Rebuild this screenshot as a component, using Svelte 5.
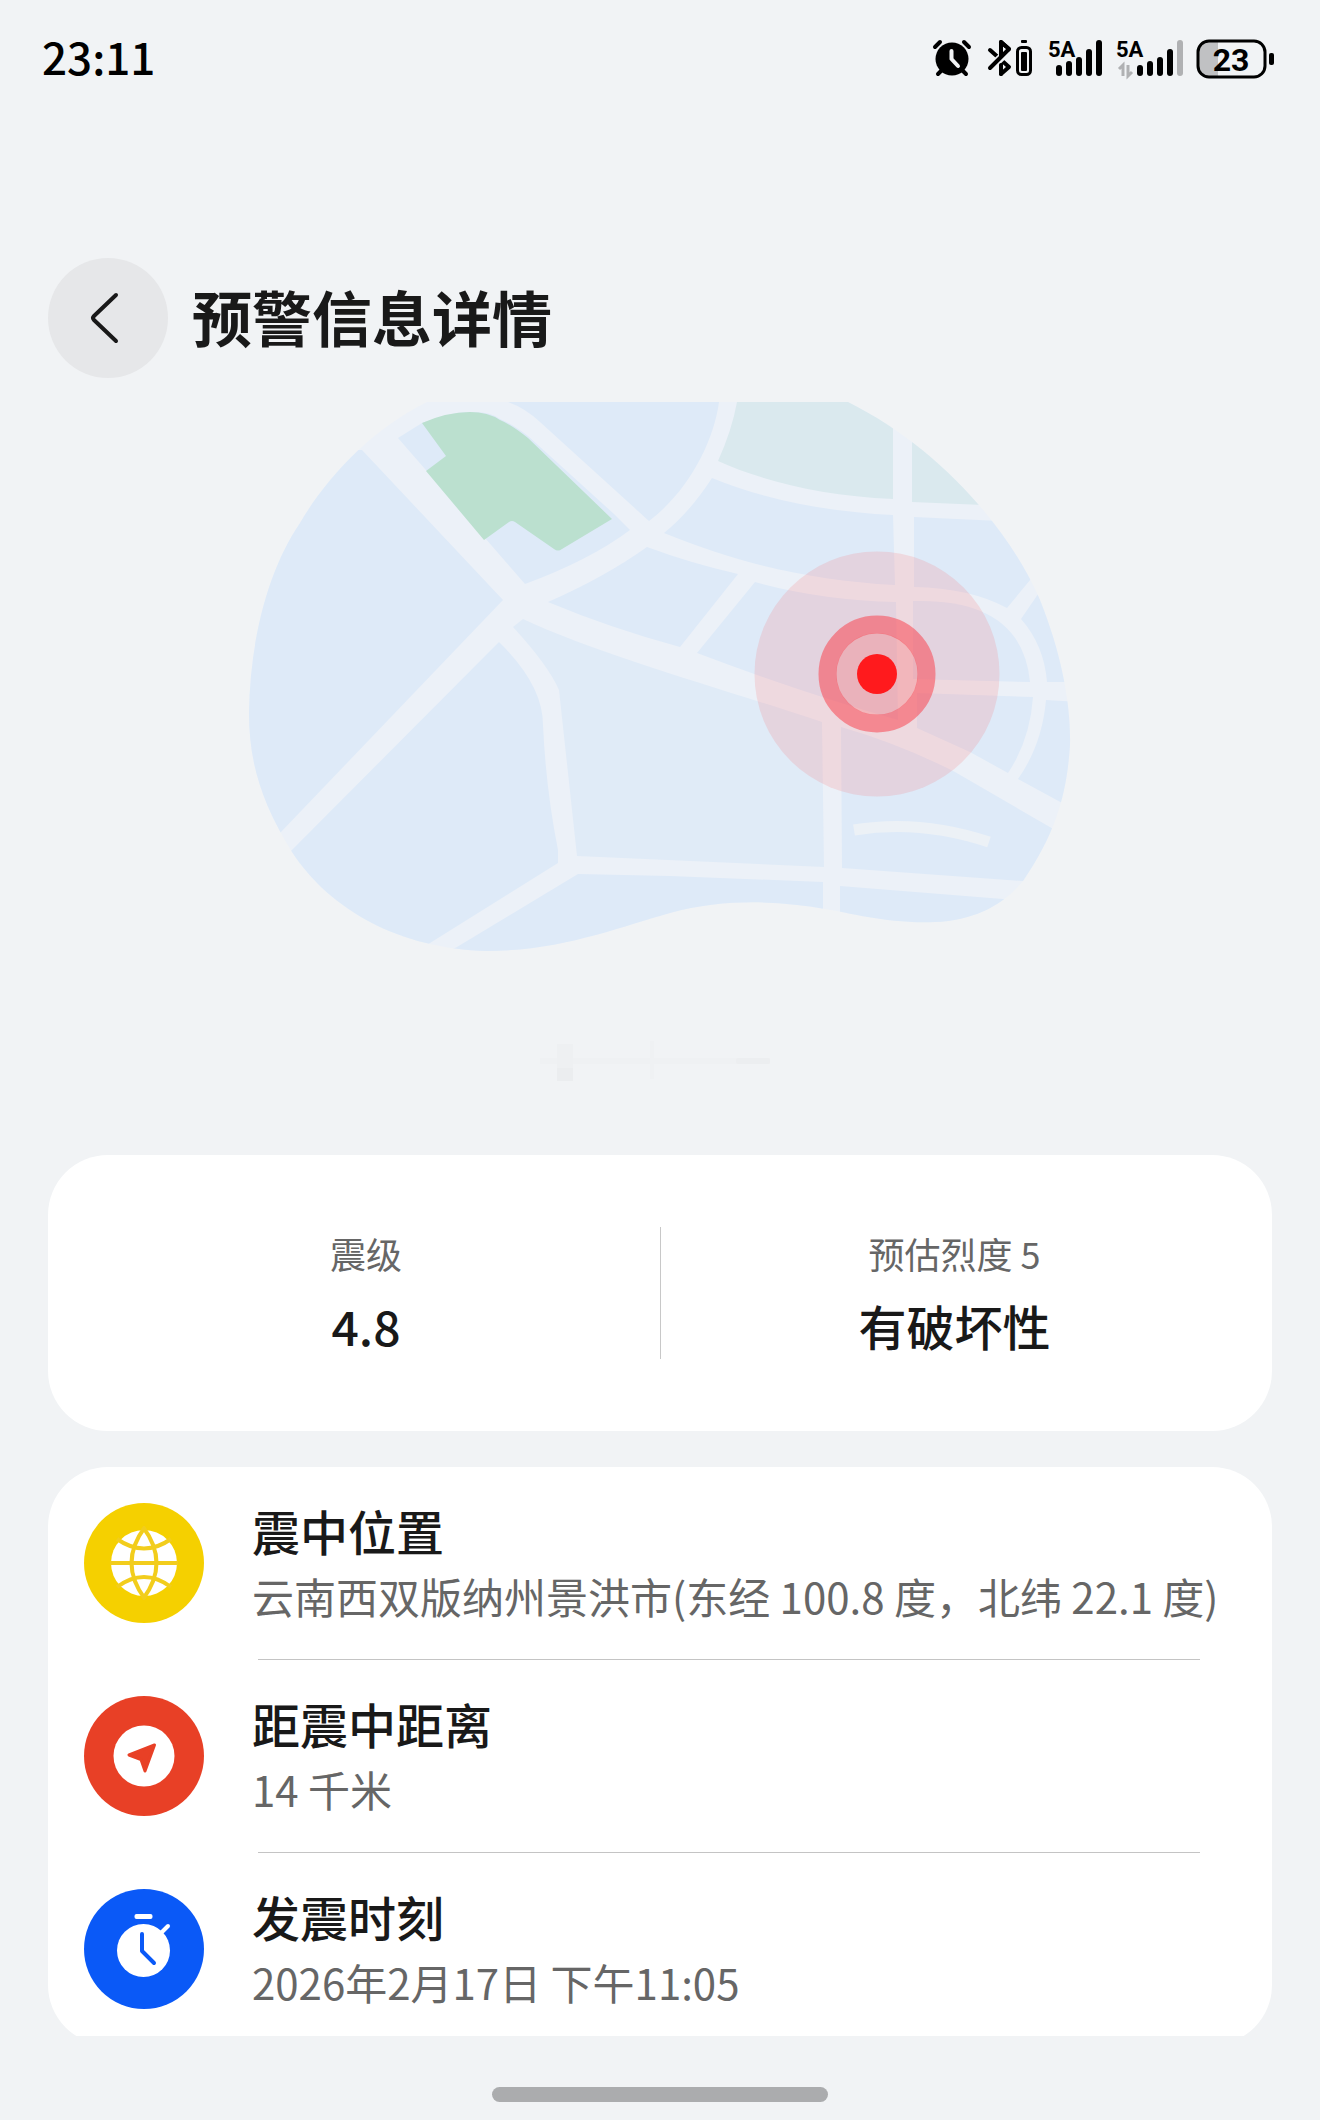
<script lang="ts">
  interface Stat {
    label: string;
    value: string;
  }
  interface Detail {
    icon: 'globe' | 'arrow' | 'clock';
    title: string;
    text: string;
  }

  const stats: Stat[] = [
    { label: '震级', value: '4.8' },
    { label: '预估烈度 5', value: '有破坏性' },
  ];

  const details: Detail[] = [
    { icon: 'globe', title: '震中位置', text: '云南西双版纳州景洪市(东经 100.8 度，北纬 22.1 度)' },
    { icon: 'arrow', title: '距震中距离', text: '14 千米' },
    { icon: 'clock', title: '发震时刻', text: '2026年2月17日 下午11:05' },
  ];

  // Tops of the five signal bars; they all end on the same baseline.
  const barTops = [29, 25, 21, 13, 4];
  const BAR_BOTTOM = 40;

  // City blocks of the map, drawn over a road-coloured ground.
  const blocks = [
    'M362 450 L503 600 L280 833 H200 V450 Z',
    'M398 438 L422 423 Q455 411 470 412 Q490 411 500 419 Q512 424 528 436 L614 514 L630 530 Q590 560 525 584 Z',
    'M508 402 Q525 408 540 422 L649 521 C690 490 714 440 719 402 Z',
    'M712 478 Q790 510 893 515 L895 585 C810 580 740 564 664 533 Q690 512 712 478 Z',
    'M914 517 L1000 521 H1060 L1050 556 L1007 608 Q970 588 914 587 Z',
    'M1021 619 L1060 562 L1100 600 V682 H1047 Q1044 645 1021 619 Z',
    'M1046 700 L1100 703 V823 L1064 804 L1018 779 Q1042 745 1046 700 Z',
    'M913 601 Q1022 598 1030 682 L913 679 Z',
    'M917 693 L1033 697 Q1030 740 1008 773 L970 752 L917 728 Z',
    'M755 582 Q820 600 896 602 L898 720 Q800 692 697 653 Z',
    'M647 547 Q690 563 738 574 L680 647 Q610 628 548 602 Q605 577 647 547 Z',
    'M499 642 Q543 685 543 725 Q546 790 558 850 V863 L430 943 L380 975 H250 L272 870 Z',
    'M578 874 L670 876 L823 882 V960 H430 L457 947 Z',
    'M840 886 L1003 899 L1030 901 V960 H840 Z',
    'M841 727 Q900 744 955 772 L1055 830 L1100 856 V885 L1023 881 L842 868 Z',
  ];
</script>

<div class="screen">
  <div class="status">
    <span class="time">23:11</span>
    <div class="status-icons">
      <svg width="42" height="44" viewBox="0 0 42 44" aria-hidden="true">
        <g fill="none" stroke="#000" stroke-width="4" stroke-linecap="round">
          <path d="M3 11 L8 6 M37 11 L32 6 M6 38 L11 33 M34 38 L29 33" />
        </g>
        <circle cx="20" cy="23" r="16.5" fill="#000" />
        <path d="M19.5 15 V23 L26 30" fill="none" stroke="#f1f3f5" stroke-width="4" stroke-linecap="round" stroke-linejoin="round" />
      </svg>
      <svg width="50" height="44" viewBox="0 0 50 44" aria-hidden="true">
        <g fill="none" stroke-linecap="round" stroke-linejoin="round">
          <path d="M4 14 L23 31 L15 38 V6 L23 13 L16 19" stroke="#000" stroke-width="4" />
          <path d="M3 33 L22 15" stroke="#f1f3f5" stroke-width="8" stroke-linecap="butt" />
          <path d="M15 38 V29 M15 6 V20 M15 6 L23 13 L4 32" stroke="#000" stroke-width="4" />
          <rect x="31.5" y="11.5" width="13" height="27" rx="4" stroke="#000" stroke-width="3" />
        </g>
        <rect x="35" y="16" width="6" height="19" rx="1" fill="#000" />
        <rect x="35" y="4" width="6" height="3" rx="1" fill="#000" />
      </svg>
      <svg width="56" height="44" viewBox="0 0 56 44" aria-hidden="true">
        <text class="net" x="0" y="21">5A</text>
        {#each barTops as top, i}
          <rect x={8 + i * 10} y={top} width="6" height={BAR_BOTTOM - top} rx="3" />
        {/each}
      </svg>
      <svg width="68" height="44" viewBox="0 0 68 44" aria-hidden="true">
        <text class="net" x="0" y="21">5A</text>
        <path d="M7 40 V29 L3 33 M12 29 V40 L16 36" fill="none" stroke="#b0b1b3" stroke-width="3" />
        {#each barTops as top, i}
          <rect x={21 + i * 10} y={top} width="6" height={BAR_BOTTOM - top} rx="3" fill={i === 4 ? '#b0b1b3' : '#000'} />
        {/each}
      </svg>
      <svg width="80" height="44" viewBox="0 0 80 44" aria-hidden="true">
        <path d="M22 5 H13 Q2 5 2 16 V30 Q2 41 13 41 H22 Z" fill="#c0c1c3" />
        <rect x="2" y="5" width="67" height="36" rx="11" fill="none" stroke="#000" stroke-width="3" />
        <rect x="73" y="17" width="5" height="12" rx="2" />
        <text class="charge" x="35" y="35" text-anchor="middle">23</text>
      </svg>
    </div>
  </div>

  <header>
    <button class="back" type="button" aria-label="返回">
      <svg width="120" height="120" viewBox="0 0 120 120" aria-hidden="true">
        <path
          d="M68 37 L46 58 Q44 60 46 62 L68 83"
          fill="none"
          stroke="#191919"
          stroke-width="4"
          stroke-linecap="round"
        />
      </svg>
    </button>
    <h1>预警信息详情</h1>
  </header>

  <main>
    <svg class="map" viewBox="240 402 840 552" role="img" aria-label="震中地图">
      <defs>
        <clipPath id="blob">
          <path
            d="M427 402 H848 C940 448 1010 530 1040 600 C1062 655 1071 705 1070 745 C1067 790 1058 830 1023 881 C1003 905 975 920 935 922 C890 924 850 913 825 909 C780 901 725 898 670 913 C620 927 560 951 487 951 C400 949 330 910 292 852 C260 800 249 760 249 713 C250 640 268 570 300 523 C325 480 370 430 427 402 Z"
          />
        </clipPath>
      </defs>
      <g clip-path="url(#blob)">
        <rect x="240" y="402" width="840" height="552" fill="#ecf1f8" />
        {#each blocks as d}
          <path {d} fill="#deeaf8" />
        {/each}
        <path
          d="M523 619 C600 655 720 688 822 722 L824 867 L577 856 L559 690 Q548 665 513 627 Z"
          fill="#e0ebf7"
        />
        <path d="M737 402 Q732 430 718 461 C760 480 820 496 893 499 V402 Z" fill="#dae9ee" />
        <path d="M912 402 V502 L985 505 V402 Z" fill="#dae9ee" />
        <path
          d="M422 423 Q447 412 470 412 Q488 412 500 420 Q512 425 528 438 L612 519 L562 549 Q558 552 554 549 L515 522 Q512 520 509 522 L484 540 L426 471 L446 456 Z"
          fill="#bbe0cf"
        />
        <path d="M854 830 Q920 819 989 842" fill="none" stroke="#ecf1f6" stroke-width="11" />
      </g>
      <circle cx="877" cy="674" r="122.5" fill="#ff5050" fill-opacity="0.15" />
      <circle cx="877" cy="674" r="41" fill="#ff5050" fill-opacity="0.25" />
      <circle cx="877" cy="674" r="49.5" fill="none" stroke="#fa4650" stroke-opacity="0.55" stroke-width="18" />
      <circle cx="877" cy="674" r="20" fill="#ff1a1d" />
    </svg>

    <svg class="trace" width="248" height="48" viewBox="0 0 248 48" aria-hidden="true">
      <rect x="4" y="20" width="230" height="6" fill="#eff1f3" />
      <rect x="200" y="20" width="34" height="6" rx="2" fill="#eceef0" />
      <rect x="21" y="6" width="16" height="37" fill="#eef0f2" />
      <rect x="21" y="30" width="16" height="13" fill="#ebedef" />
      <rect x="114" y="3" width="4" height="38" fill="#eff1f3" />
    </svg>

    <section class="card stats">
      {#each stats as stat}
        <div class="stat">
          <span class="stat-label">{stat.label}</span>
          <span class="stat-value">{stat.value}</span>
        </div>
      {/each}
    </section>

    <section class="card">
      {#each details as detail}
        <article class="detail">
          <svg width="120" height="120" viewBox="0 0 120 120" aria-hidden="true">
            {#if detail.icon === 'globe'}
              <circle cx="60" cy="60" r="60" fill="#f5d000" />
              <circle cx="60" cy="60" r="33" fill="#fff" />
              <g fill="none" stroke="#f2cd1c" stroke-width="4">
                <path d="M26 60 H94" />
                <path d="M61 24 Q34 60 61 96 M59 24 Q86 60 59 96" />
                <path d="M33 36 Q60 55 87 36 M33 84 Q60 64 87 84" />
              </g>
            {:else if detail.icon === 'arrow'}
              <circle cx="60" cy="60" r="60" fill="#e84026" />
              <circle cx="60" cy="60" r="30.5" fill="#fff" />
              <path
                d="M70.5 49 L45 59 L57 63.5 L61 75 Z"
                fill="#e84026"
                stroke="#e84026"
                stroke-width="3"
                stroke-linejoin="round"
              />
            {:else}
              <circle cx="60" cy="60" r="60" fill="#0a59f7" />
              <circle cx="59.5" cy="61.5" r="26.5" fill="#fff" />
              <rect x="50.5" y="25" width="18" height="5" rx="2" fill="#fff" />
              <path d="M76 45 L84 37" stroke="#fff" stroke-width="4" stroke-linecap="round" />
              <path
                d="M58 45 V62 L70 74"
                fill="none"
                stroke="#0a59f7"
                stroke-width="4"
                stroke-linecap="round"
                stroke-linejoin="round"
              />
            {/if}
          </svg>
          <div class="detail-body">
            <h2>{detail.title}</h2>
            <p>{detail.text}</p>
          </div>
        </article>
      {/each}
    </section>
  </main>

  <footer>
    <div class="home-bar"></div>
  </footer>
</div>

<style>
  :global(body) {
    background: #f1f3f5;
  }

  .screen {
    display: flex;
    flex-direction: column;
    height: 100vh;
    color: #191919;
    font-family: 'Noto Sans CJK SC', sans-serif;
  }

  .status {
    display: flex;
    align-items: center;
    justify-content: space-between;
    flex: none;
    height: 116px;
    padding: 0 44px 0 42px;
    color: #000;
  }

  .time {
    padding-bottom: 4px;
    font-size: 44px;
    font-weight: 500;
    line-height: 64px;
  }

  .status-icons {
    display: flex;
    gap: 12px;
  }

  .status-icons svg {
    overflow: visible;
  }

  .net,
  .charge {
    font-family: Roboto, sans-serif;
    font-weight: 700;
  }

  .net {
    font-size: 22px;
  }

  .charge {
    font-size: 32px;
  }

  header {
    display: flex;
    align-items: center;
    flex: none;
    gap: 24px;
    padding: 142px 48px 24px;
  }

  .back {
    flex: none;
    width: 120px;
    height: 120px;
    padding: 0;
    border: 0;
    border-radius: 50%;
    background: #e6e7e9;
    cursor: pointer;
  }

  .back svg {
    display: block;
  }

  h1 {
    margin: 0;
    padding-bottom: 4px;
    font-size: 60px;
    font-weight: 700;
    line-height: 84px;
  }

  /* The content scrolls between the title and the home bar. */
  main {
    display: flex;
    flex-direction: column;
    flex: 1;
    min-height: 0;
    padding: 0 48px;
    overflow-y: auto;
    scrollbar-width: none;
  }

  .map {
    flex: none;
    align-self: center;
    width: 840px;
    max-width: 100%;
  }

  .trace {
    flex: none;
    align-self: center;
    margin: 84px 0 69px;
  }

  .card {
    flex: none;
    border-radius: 60px;
    background: #fff;
  }

  .stats {
    display: grid;
    grid-template-columns: 1fr 1fr;
    margin-bottom: 36px;
    padding: 72px 0;
  }

  .stat {
    display: flex;
    flex-direction: column;
    align-items: center;
    gap: 16px;
    padding: 0 0 4px 24px;
  }

  .stat + .stat {
    padding: 0 24px 4px 0;
    border-left: 1px solid #c8c8c8;
  }

  .stat-label {
    color: #666;
    font-size: 36px;
    line-height: 52px;
  }

  .stat-value {
    font-size: 48px;
    font-weight: 500;
    line-height: 60px;
  }

  .detail {
    display: grid;
    grid-template-columns: 120px 1fr;
    align-items: center;
    column-gap: 48px;
    padding: 30px 36px;
  }

  .detail + .detail::before {
    content: '';
    grid-column: 1 / -1;
    height: 1px;
    margin: -30px 36px 30px 174px;
    background: #c4c4c4;
  }

  h2 {
    margin: 0;
    font-size: 48px;
    font-weight: 500;
    line-height: 66px;
  }

  p {
    margin: 0;
    color: #666;
    font-size: 42px;
    line-height: 66px;
  }

  footer {
    display: flex;
    justify-content: center;
    align-items: center;
    flex: none;
    height: 84px;
    padding-top: 32px;
    box-sizing: border-box;
  }

  .home-bar {
    width: 336px;
    height: 15px;
    border-radius: 8px;
    background: #abacae;
  }
</style>
